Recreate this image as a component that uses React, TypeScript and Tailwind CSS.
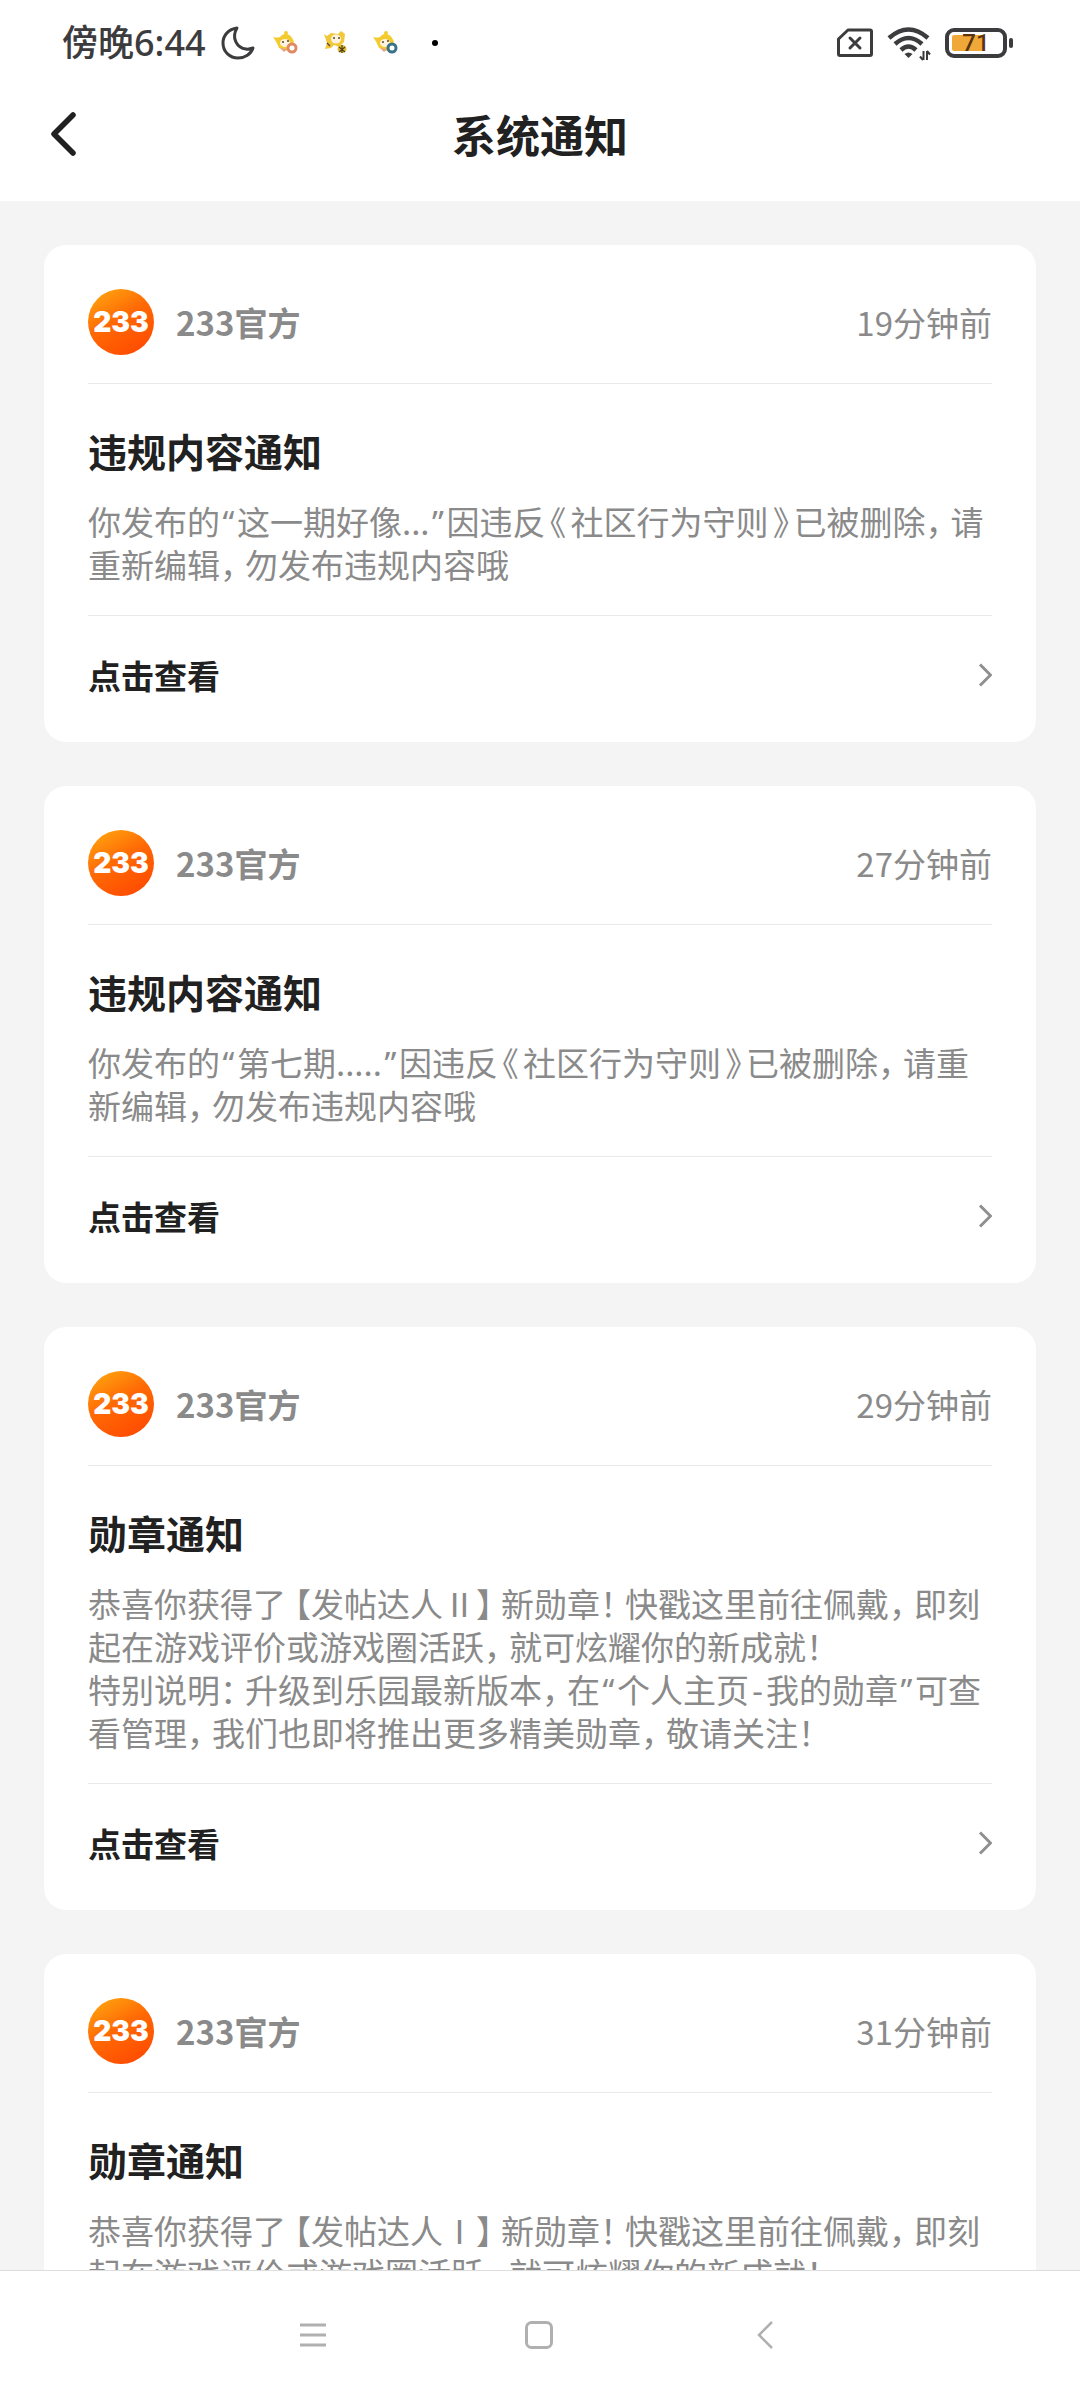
type Notice = {
  id: string;
  time: string;
  title: string;
  lines: string[];
};

const notices: Notice[] = [
  {
    id: "n1",
    time: "19分钟前",
    title: "违规内容通知",
    lines: ["你发布的“这一期好像...”因违反《社区行为守则》已被删除，请", "重新编辑，勿发布违规内容哦"],
  },
  {
    id: "n2",
    time: "27分钟前",
    title: "违规内容通知",
    lines: ["你发布的“第七期.....”因违反《社区行为守则》已被删除，请重", "新编辑，勿发布违规内容哦"],
  },
  {
    id: "n3",
    time: "29分钟前",
    title: "勋章通知",
    lines: [
      "恭喜你获得了【发帖达人Ⅱ】新勋章！快戳这里前往佩戴，即刻",
      "起在游戏评价或游戏圈活跃，就可炫耀你的新成就！",
      "特别说明：升级到乐园最新版本，在“个人主页-我的勋章”可查",
      "看管理，我们也即将推出更多精美勋章，敬请关注！",
    ],
  },
  {
    id: "n4",
    time: "31分钟前",
    title: "勋章通知",
    lines: [
      "恭喜你获得了【发帖达人Ⅰ】新勋章！快戳这里前往佩戴，即刻",
      "起在游戏评价或游戏圈活跃，就可炫耀你的新成就！",
      "特别说明：升级到乐园最新版本，在“个人主页-我的勋章”可查",
      "看管理，我们也即将推出更多精美勋章，敬请关注！",
    ],
  },
];

// punctuation uses the half-width forms, set in cells narrower than a full character
function markClass(ch: string) {
  if (/^[《》]$/.test(ch)) return "inline-flex w-[25px] justify-center [font-feature-settings:'halt']";
  if (/^【$/.test(ch)) return "inline-flex w-[25px] justify-end [font-feature-settings:'halt']";
  if (/^[】，！：]$/.test(ch)) return "inline-flex w-[25px] [font-feature-settings:'halt']";
  if (/^[“”-]$/.test(ch)) return "inline-flex w-[17px] justify-center font-['Noto_Sans']";
  return null;
}

function Line({ text }: { text: string }) {
  return (
    <span className="block h-[43px] whitespace-nowrap">
      {text.split(/([，！：《》【】“”-])/).map((part, i) => {
        const cls = markClass(part);
        return cls ? (
          <span key={i} className={cls}>
            {part}
          </span>
        ) : (
          part
        );
      })}
    </span>
  );
}

function Mascot({ badge }: { badge: string }) {
  return (
    <svg width="28" height="26" viewBox="0 0 28 26" aria-hidden="true">
      <path d="M1 7 Q5 8 8 7 Q10 4 13 4 Q18 4 20 8 Q23 11 21 16 L14 21 L7 18 Q5 12 1 7 Z" fill="#f4cb2e" />
      <circle cx="14" cy="3" r="2" fill="#f4cb2e" />
      <ellipse cx="13" cy="13" rx="5" ry="4" fill="#fff3e0" />
      <path d="M10 12h2M15 11h2" stroke="#5b4632" strokeWidth="1.400" />
      <path d="M8 18l4 4 3-3z" fill="#e5a487" />
      <circle cx="20" cy="18" r="4" fill="#fff" stroke={badge} strokeWidth="3" />
    </svg>
  );
}

function StatusBar() {
  return (
    <div className="flex h-[85px] items-center justify-between pr-[67px] pl-[62px] text-[#3c3c3e]">
      <div className="flex items-center">
        <span className="font-['Noto_Sans','Noto_Sans_CJK_SC',sans-serif] text-[36px] leading-[44px] font-medium">
          傍晚6:44
        </span>
        <svg className="ml-[14px]" width="36" height="36" viewBox="0 0 36 36" fill="none" aria-hidden="true">
          <path
            d="M17 3 C9 4 3 10 3 18 C3 27 10 33 18 33 C25 33 31 29 33 23 C30 24 28 24.500 26 24 C17 23 11 13 17 3 Z"
            stroke="currentColor"
            strokeWidth="3"
            strokeLinejoin="round"
          />
        </svg>
        <div className="ml-4 flex items-center gap-[22px]">
          <Mascot badge="#e08a64" />
          <svg width="28" height="26" viewBox="0 0 28 26" aria-hidden="true">
            <path d="M2 4 L5 6 L9 3 L16 4 L19 1 L23 4 L22 12 L17 17 L12 15 L9 18 L3 19 L5 13 Z" fill="#f0c838" />
            <ellipse cx="14" cy="9" rx="5" ry="4.500" fill="#fff3e0" />
            <path d="M11 8h2M16 8h2M5 13l3 3" stroke="#5b4632" strokeWidth="1.400" />
            <ellipse cx="20" cy="19" rx="4.500" ry="4" fill="#dfbd33" />
            <path d="M17 17l6 5M17 22l6-5M20 15v8" stroke="#54431f" strokeWidth="1.200" />
          </svg>
          <Mascot badge="#3a7286" />
        </div>
        <span className="ml-8 size-[6px] rounded-full bg-black" />
      </div>

      <div className="flex items-center">
        <svg width="36" height="30" viewBox="0 0 36 30" fill="none" stroke="currentColor" strokeLinejoin="round" aria-hidden="true">
          <path d="M11 2 H33 Q34.500 2 34.500 3.500 V26 Q34.500 27.500 33 27.500 H3 Q1.500 27.500 1.500 26 V11 Z" strokeWidth="3" />
          <path d="M13 10 L23 20 M23 10 L13 20" strokeWidth="3" strokeLinecap="round" />
        </svg>
        <svg className="ml-[14px]" width="44" height="36" viewBox="0 0 44 36" fill="none" stroke="currentColor" aria-hidden="true">
          <path d="M2 13 Q21.500 -4 41 13" strokeWidth="4.500" />
          <path d="M8 19 Q21.500 7 35 19" strokeWidth="4.500" />
          <path d="M14 25 Q21.500 18 29 25" strokeWidth="4.500" />
          <path d="M17.500 29 Q21.500 26 25.500 29 L21.500 33 Z" fill="currentColor" stroke="none" />
          <path d="M36.500 26 V35 M36 35 L33 31.500 M40 35 V26 M40 26 L43 29.500" strokeWidth="2" />
        </svg>
        <div className="ml-[14px] flex items-center gap-[2px]">
          <div className="relative flex h-[30px] w-[62px] items-center rounded-[9px] border-4 border-[#3c3c3e] p-[3px]">
            <div className="h-4 w-[31px] rounded-[2px] bg-[#f0a838]" />
            <span className="absolute inset-0 flex items-center justify-center font-[Roboto] text-[24px] leading-[22px] font-medium text-[#5a3410]">
              71
            </span>
          </div>
          <span className="h-[10px] w-1 rounded-[2px] bg-[#3c3c3e]" />
        </div>
      </div>
    </div>
  );
}

function NoticeCard({ notice }: { notice: Notice }) {
  return (
    <article className="rounded-[22px] bg-white px-11 pt-11">
      <div className="flex h-[66px] items-center">
        <div className="flex size-[66px] items-center justify-center rounded-full bg-linear-[150deg,#ffae10,#ff6a05_45%,#ff4400] font-[Inter] text-[28px] leading-none font-black text-white">
          233
        </div>
        <span className="ml-[22px] text-[33px] leading-[44px] font-bold text-[#8a8a8a]">233官方</span>
        <time className="ml-auto text-[33px] leading-[44px] text-[#8a8a8a]">{notice.time}</time>
      </div>

      <div className="mt-7 border-t border-[#e9e9e9] pt-10">
        <h2 className="text-[39px] leading-[52px] font-bold text-[#212121]">{notice.title}</h2>
        <p className="mt-6 text-[33px] leading-[43px] text-[#8a8a8a]">
          {notice.lines.map((line) => (
            <Line key={line} text={line} />
          ))}
        </p>
      </div>

      <a
        href="#detail"
        className="mt-[29px] flex items-center justify-between border-t border-[#e9e9e9] pt-[37px] pb-[45px]"
      >
        <span className="text-[33px] leading-[44px] font-bold text-[#212121]">点击查看</span>
        <svg width="14" height="24" viewBox="0 0 14 24" fill="none" aria-hidden="true">
          <path d="M2 1.500 L12.500 12 L2 22.500" stroke="#8f8f8f" strokeWidth="3" />
        </svg>
      </a>
    </article>
  );
}

export default function App() {
  return (
    <div className="flex h-screen flex-col bg-[#f4f4f4] font-['Noto_Sans_CJK_SC','Noto_Sans',sans-serif]" lang="zh-CN">
      <header className="shrink-0 bg-white">
        <StatusBar />
        <div className="grid h-[116px] grid-cols-[1fr_auto_1fr] items-start pt-[22px]">
          <button type="button" aria-label="返回" className="ml-[44px] flex h-[54px] w-[50px] items-center">
            <svg width="38" height="48" viewBox="0 0 38 48" fill="none" aria-hidden="true">
              <path d="M29 5 L10 24 L29 43" stroke="#212121" strokeWidth="5.500" strokeLinecap="round" strokeLinejoin="round" />
            </svg>
          </button>
          <h1 className="text-[44px] leading-[54px] font-bold text-[#212121]">系统通知</h1>
        </div>
      </header>

      <main className="flex min-h-0 flex-1 flex-col gap-11 overflow-y-auto px-11 pt-11 [scrollbar-width:none]">
        {notices.map((n) => (
          <NoticeCard key={n.id} notice={n} />
        ))}
      </main>

      <nav className="grid h-[130px] shrink-0 grid-cols-3 items-center justify-items-center border-t border-[#dedede] bg-white pr-[202px] pb-[2px] pl-[200px] text-[#b0b0b0]">
        <button type="button" aria-label="最近任务" className="p-4">
          <svg width="28" height="28" viewBox="0 0 28 28" stroke="currentColor" strokeWidth="3" aria-hidden="true">
            <path d="M1 4 H27 M1 14 H27 M1 24 H27" />
          </svg>
        </button>
        <button type="button" aria-label="主页" className="p-4">
          <svg width="28" height="28" viewBox="0 0 28 28" fill="none" stroke="currentColor" strokeWidth="3" aria-hidden="true">
            <rect x="1.500" y="1.500" width="25" height="25" rx="5" />
          </svg>
        </button>
        <button type="button" aria-label="后退" className="p-4">
          <svg width="28" height="28" viewBox="0 0 28 28" fill="none" stroke="currentColor" strokeWidth="2.500" aria-hidden="true">
            <path d="M21 1 L8 14 L21 27" />
          </svg>
        </button>
      </nav>
    </div>
  );
}
